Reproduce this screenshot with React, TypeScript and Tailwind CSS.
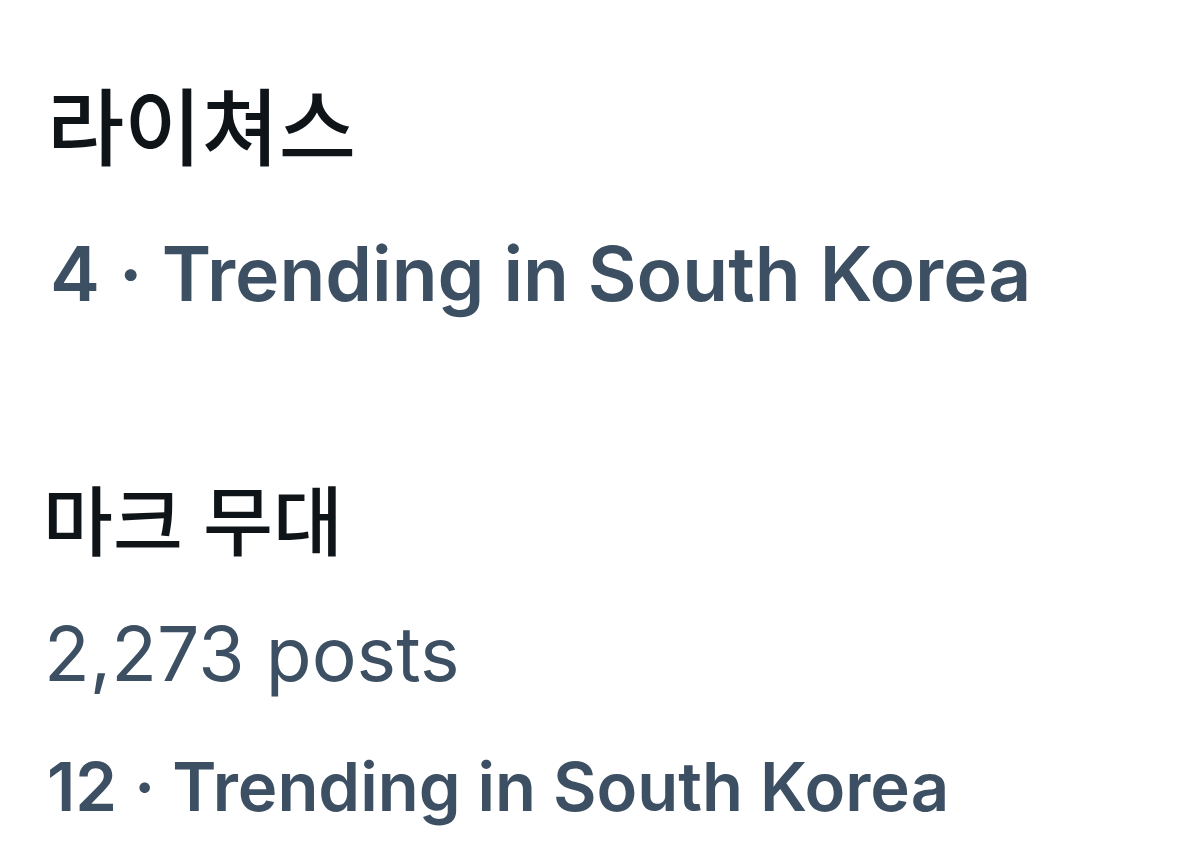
const items = [
  { title: "라이쳐스", meta: null as string | null, rank: "4" },
  { title: "마크 무대", meta: "2,273 posts", rank: "12" },
];

export default function App() {
  return (
    <div className="w-[1200px] h-[858px] bg-white overflow-hidden font-['Inter','Noto_Sans_CJK_KR',sans-serif]">
      <div className="pt-[87px]">
        <div className="pl-[47px] text-[84px] leading-none font-medium text-[#0f1419]">{items[0].title}</div>
        <div className="pl-[50px] mt-[65px] text-[75px] leading-none font-semibold text-[#3d5063]">
          {items[0].rank} · Trending in South Korea
        </div>
      </div>
      <div className="pt-[173px]">
        <div className="pl-[43px] text-[76px] leading-none font-medium text-[#0f1419]">{items[1].title}</div>
        <div className="pl-[44px] mt-[56px] text-[75px] leading-none text-[#3d5063]">{items[1].meta}</div>
        <div className="pl-[47px] mt-[62px] text-[67px] leading-none font-semibold text-[#3d5063]">
          {items[1].rank} · Trending in South Korea
        </div>
      </div>
    </div>
  );
}
